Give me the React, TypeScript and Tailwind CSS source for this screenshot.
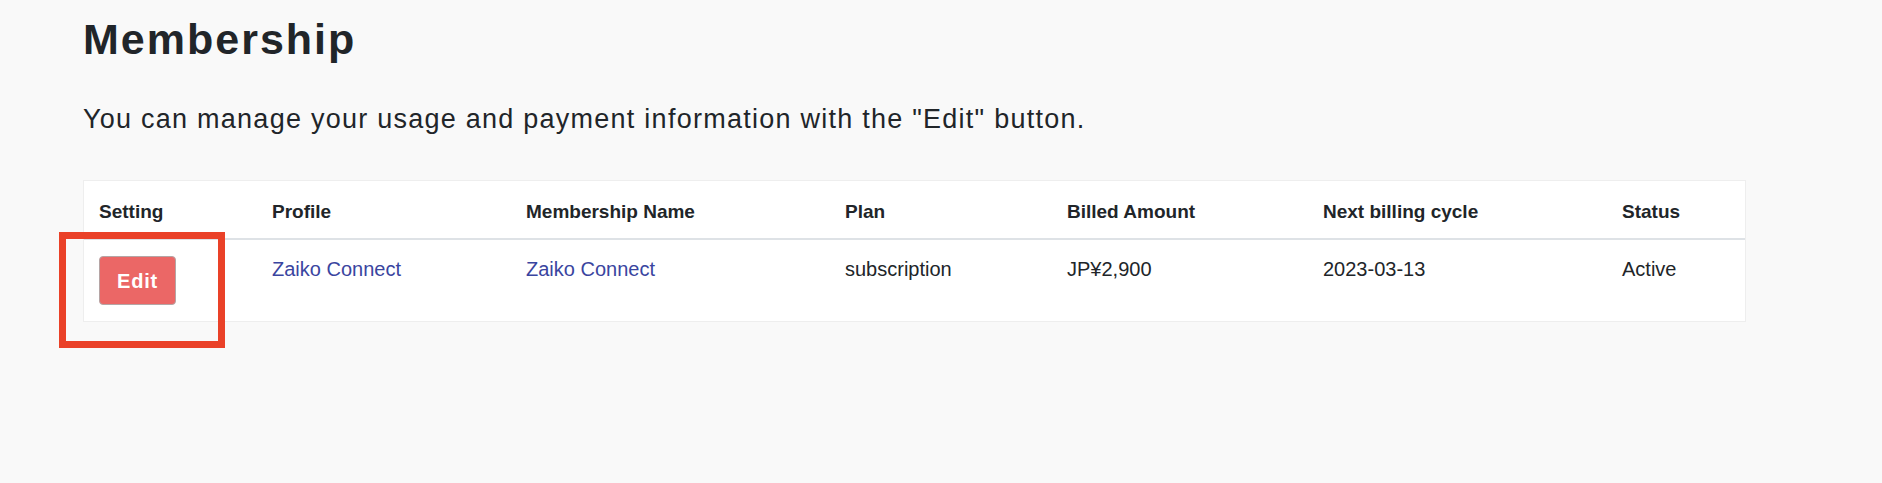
import React from "react";

const headers = ["Setting", "Profile", "Membership Name", "Plan", "Billed Amount", "Next billing cycle", "Status"];

export default function App() {
  return (
    <div
      className="w-full h-[483px] bg-[#f9f9f9] text-[#212529] overflow-hidden"
      style={{ fontFamily: '"Liberation Sans", Arial, sans-serif' }}
    >
      <div className="pl-[83px] pr-[136px] pt-[15px]">
        <h1 className="text-[43px] leading-[48px] font-bold tracking-[2px] text-[#212529]">Membership</h1>
        <p className="mt-[36px] text-[27px] leading-[40px] tracking-[1.25px] text-[#212529]">
          You can manage your usage and payment information with the "Edit" button.
        </p>
        <div className="relative mt-[41px] w-[1663px]">
          <div className="bg-white border border-[#eeeeee]">
            <div className="grid grid-cols-[173px_254px_319px_222px_256px_299px_1fr] h-[59px] border-b-2 border-[#dee2e6]">
              {headers.map((h) => (
                <div key={h} className="pl-[15px] pt-[16px] text-[19px] leading-[30px] font-bold">
                  {h}
                </div>
              ))}
            </div>
            <div className="grid grid-cols-[173px_254px_319px_222px_256px_299px_1fr] h-[81px] text-[20px] leading-[30px]">
              <div className="pl-[15px] pt-[16px]">
                <button className="w-[77px] h-[49px] flex items-center justify-center rounded-[4px] bg-[#eb6766] border border-[#b5a5a5] text-white font-bold text-[20px] tracking-[0.8px]">
                  Edit
                </button>
              </div>
              <div className="pl-[15px] pt-[14px]">
                <a className="text-[#3a45a0]">Zaiko Connect</a>
              </div>
              <div className="pl-[15px] pt-[14px]">
                <a className="text-[#3a45a0]">Zaiko Connect</a>
              </div>
              <div className="pl-[15px] pt-[14px]">subscription</div>
              <div className="pl-[15px] pt-[14px]">JP¥2,900</div>
              <div className="pl-[15px] pt-[14px]">2023-03-13</div>
              <div className="pl-[15px] pt-[14px]">Active</div>
            </div>
          </div>
          <div className="absolute left-[-24px] top-[52px] w-[166px] h-[116px] border-[7px] border-[#ea4128] pointer-events-none" />
        </div>
      </div>
    </div>
  );
}
